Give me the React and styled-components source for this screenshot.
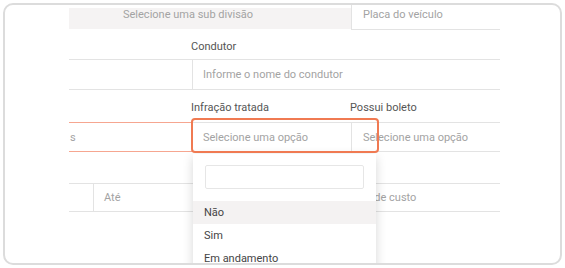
import React from "react";
import styled, { createGlobalStyle } from "styled-components";

const GlobalStyle = createGlobalStyle`
    html, body {
        margin: 0;
        padding: 0;
        background: #ffffff;
        font-family: Roboto, "Liberation Sans", sans-serif;
    }
    * {
        box-sizing: border-box;
    }
`;

const Card = styled.div`
    margin: 3px;
    width: 559px;
    height: 262px;
    border: 2px solid #dcdcdc;
    border-radius: 10px;
    background: #ffffff;
    overflow: hidden;
    padding-left: 64px;
`;

const Form = styled.div`
    width: 431px;
    display: grid;
    grid-template-columns: 123px 159px 149px;
    font-size: 11px;
`;

const SubDivision = styled.div`
    grid-column: span 2;
    margin-top: 3px;
    height: 21px;
    background: #f5f3f3;
    color: #a3a3a3;
    line-height: 13px;
    padding-left: 54px;
`;

const TopField = styled.div`
    height: 25px;
    border-left: 1px solid #e3e3e3;
    border-bottom: 1px solid #e3e3e3;
    padding: 3px 11px 0;
    line-height: 13px;
    color: #a3a3a3;
`;

const Label = styled.div`
    grid-column: ${p => p.span ? `span ${p.span}` : "auto"};
    height: ${p => p.h}px;
    padding-top: ${p => p.pt}px;
    margin-left: ${p => p.ml || 0}px;
    line-height: 13px;
    color: #555555;
`;

const Input = styled.div`
    position: relative;
    grid-column: ${p => p.span ? `span ${p.span}` : "auto"};
    height: ${p => p.h || 30}px;
    border-top: 1px solid ${p => p.error ? "#f6a690" : "#e3e3e3"};
    border-bottom: 1px solid ${p => p.error ? "#f6a690" : "#e3e3e3"};
    border-left: ${p => p.edge ? "1px solid #e3e3e3" : "none"};
    padding-left: ${p => p.pl ?? 10}px;
    display: flex;
    align-items: center;
    color: #a3a3a3;
`;

const Spacer = styled.div`
    grid-column: span 3;
    height: ${p => p.h}px;
`;

const BottomRow = styled.div`
    grid-column: span 3;
    display: flex;
    height: 29px;
    border-top: 1px solid #e3e3e3;
    border-bottom: 1px solid #e3e3e3;
    color: #a3a3a3;
`;

const BottomCell = styled.div`
    width: ${p => p.w ? `${p.w}px` : "auto"};
    flex: ${p => p.w ? "none" : 1};
    border-left: ${p => p.edge ? "1px solid #e3e3e3" : "none"};
    padding-left: ${p => p.pl || 0}px;
    display: flex;
    align-items: center;
    white-space: nowrap;
`;

const Highlight = styled.div`
    position: absolute;
    top: -5px;
    left: -2px;
    width: 188px;
    height: 35px;
    border: 2px solid #f07a52;
    border-radius: 4px;
    z-index: 3;
    pointer-events: none;
`;

const Dropdown = styled.div`
    position: absolute;
    top: 31px;
    left: 0;
    width: 183px;
    height: 130px;
    background: #ffffff;
    box-shadow: 0 3px 10px rgba(0, 0, 0, 0.16);
    padding-top: 11px;
    z-index: 2;
`;

const Search = styled.div`
    margin: 0 12px 12px;
    height: 24px;
    border: 1px solid #e6e6e6;
    border-radius: 2px;
`;

const Option = styled.div`
    height: 23px;
    padding-left: 11px;
    display: flex;
    align-items: center;
    color: #444444;
    background: ${p => p.active ? "#f4f2f2" : "transparent"};
`;

const options = ["Não", "Sim", "Em andamento"];

export default function App() {
    return (
        <>
            <GlobalStyle />
            <Card>
                <Form>
                    <SubDivision>Selecione uma sub divisão</SubDivision>
                    <TopField>Placa do veículo</TopField>

                    <div />
                    <Label span={2} h={29} pt={10} ml={-1}>Condutor</Label>
                    <Input h={31} pl={0} />
                    <Input h={31} span={2} edge>Informe o nome do condutor</Input>

                    <div />
                    <Label h={32} pt={11} ml={-1}>Infração tratada</Label>
                    <Label h={32} pt={11} ml={-1}>Possui boleto</Label>
                    <Input error pl={1}>s</Input>
                    <Input edge>
                        Selecione uma opção
                        <Highlight />
                        <Dropdown>
                            <Search />
                            {options.map((o, i) => (
                                <Option key={o} active={i === 0}>{o}</Option>
                            ))}
                        </Dropdown>
                    </Input>
                    <Input edge pl={11}>Selecione uma opção</Input>

                    <Spacer h={31} />
                    <BottomRow>
                        <BottomCell w={24} />
                        <BottomCell w={234} edge pl={10}>Até</BottomCell>
                        <BottomCell edge pl={11}>Centro de custo</BottomCell>
                    </BottomRow>
                </Form>
            </Card>
        </>
    );
}
